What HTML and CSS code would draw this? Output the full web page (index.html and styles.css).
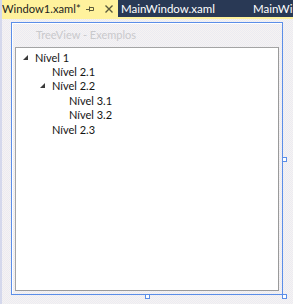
FILE: index.html
```html
<!DOCTYPE html>
<html lang="pt">
<head>
    <meta charset="UTF-8">
    <title>Window1.xaml</title>
    <link rel="stylesheet" href="styles.css">
</head>
<body>
    <!-- abas de documentos -->
    <div class="tabbar">
        <div class="tab active">
            <span class="tab-name">Window1.xaml*</span>
            <svg class="pin" width="8" height="6" viewBox="0 0 8 6">
                <path d="M0 3.5H3M3.5 0.5V5.5M3.5 1.5H7.5V4.5H3.5" fill="none" stroke="#5a5a3c" stroke-width="1"/>
            </svg>
            <svg class="close" width="8" height="8" viewBox="0 0 8 8">
                <path d="M0.5 0.5L7.5 7.5M7.5 0.5L0.5 7.5" stroke="#5a5a3c" stroke-width="1.4"/>
            </svg>
        </div>
        <div class="tab">MainWindow.xaml</div>
        <div class="tab">MainWin</div>
    </div>
    <div class="tabline"></div>

    <!-- area do designer -->
    <div class="designer">
        <div class="adorner">
            <div class="win-title">TreeView - Exemplos</div>
            <div class="frame">
                <ul class="tree">
                    <li>
                        <div class="row lvl0"><span class="toggle"><svg width="5" height="5" viewBox="0 0 5 5"><polygon points="5,0 5,5 0,5"/></svg></span>Nível 1</div>
                        <ul>
                            <li><div class="row lvl1"><span class="toggle"></span>Nível 2.1</div></li>
                            <li>
                                <div class="row lvl1"><span class="toggle"><svg width="5" height="5" viewBox="0 0 5 5"><polygon points="5,0 5,5 0,5"/></svg></span>Nível 2.2</div>
                                <ul>
                                    <li><div class="row lvl2"><span class="toggle"></span>Nível 3.1</div></li>
                                    <li><div class="row lvl2"><span class="toggle"></span>Nível 3.2</div></li>
                                </ul>
                            </li>
                            <li><div class="row lvl1"><span class="toggle"></span>Nível 2.3</div></li>
                        </ul>
                    </li>
                </ul>
            </div>
            <span class="handle h-right"></span>
            <span class="handle h-bottom"></span>
            <span class="handle h-corner"></span>
        </div>
    </div>
</body>
</html>
```

FILE: styles.css
```css
/* pagina do designer */
body {
    margin: 0;
    width: 293px;
    height: 304px;
    overflow: hidden;
    font-family: Lato, "Noto Sans", sans-serif;
    background-color: #f1f0f4;
    background-image: repeating-conic-gradient(#f6f3f2 0 25%, #ebebf2 0 50%);
    background-size: 2px 2px;
    border-left: 2px solid #d4d8ec;
    box-sizing: border-box;
}

.tabbar {
    display: flex;
    height: 17px;
    margin-left: -2px;
    background: #293955;
    white-space: nowrap;
    overflow: hidden;
}

.tab {
    display: flex;
    align-items: center;
    flex: none;
    color: #ffffff;
    font-size: 11.5px;
}

.tab.active {
    width: 118px;
    box-sizing: border-box;
    padding-left: 2px;
    background: #fff29d;
    color: #1e1e1e;
    font-size: 11.2px;
}

.tab.active + .tab {
    width: 135px;
    padding-left: 3px;
    box-sizing: border-box;
}

.tab-name {
    width: 84px;
}

.pin {
    margin-right: 11px;
}

.tabline {
    height: 2px;
    margin-left: -2px;
    background: #fff29d;
}

.designer {
    padding: 3px 0 0 9px;
}

.adorner {
    position: relative;
    display: flex;
    flex-direction: column;
    width: 272px;
    height: 273px;
    box-sizing: border-box;
    padding: 0 3px 3px 3px;
    border: 1px solid #5b8ee8;
    box-shadow: inset 1px 1px 0 #ffffff;
}

.win-title {
    height: 24px;
    line-height: 23px;
    padding-left: 21px;
    color: #c9c9cc;
    font-size: 11px;
}

.frame {
    flex: 1;
    background: #ffffff;
    border: 1px solid #a4a4a4;
    border-right-color: #9a9a9a;
    border-bottom-color: #9a9a9a;
}

.tree,
.tree ul {
    list-style: none;
    margin: 0;
    padding: 0;
}

.tree {
    padding-top: 2px;
}

.row {
    display: flex;
    align-items: center;
    height: 14.4px;
    color: #141414;
    font-size: 11px;
}

.lvl0 { padding-left: 4px; }
.lvl1 { padding-left: 21px; }
.lvl2 { padding-left: 38px; }

.toggle {
    display: flex;
    width: 15px;
    padding-left: 3px;
    box-sizing: border-box;
}

.toggle svg {
    fill: #3a3a3a;
}

/* alcas de redimensionamento */
.handle {
    position: absolute;
    width: 3px;
    height: 3px;
    border: 1px solid #5b8ee8;
    background: #ffffff;
}

.h-right {
    right: -5px;
    top: 134px;
}

.h-bottom {
    left: 133px;
    bottom: -5px;
}

.h-corner {
    right: -5px;
    bottom: -5px;
}
```
